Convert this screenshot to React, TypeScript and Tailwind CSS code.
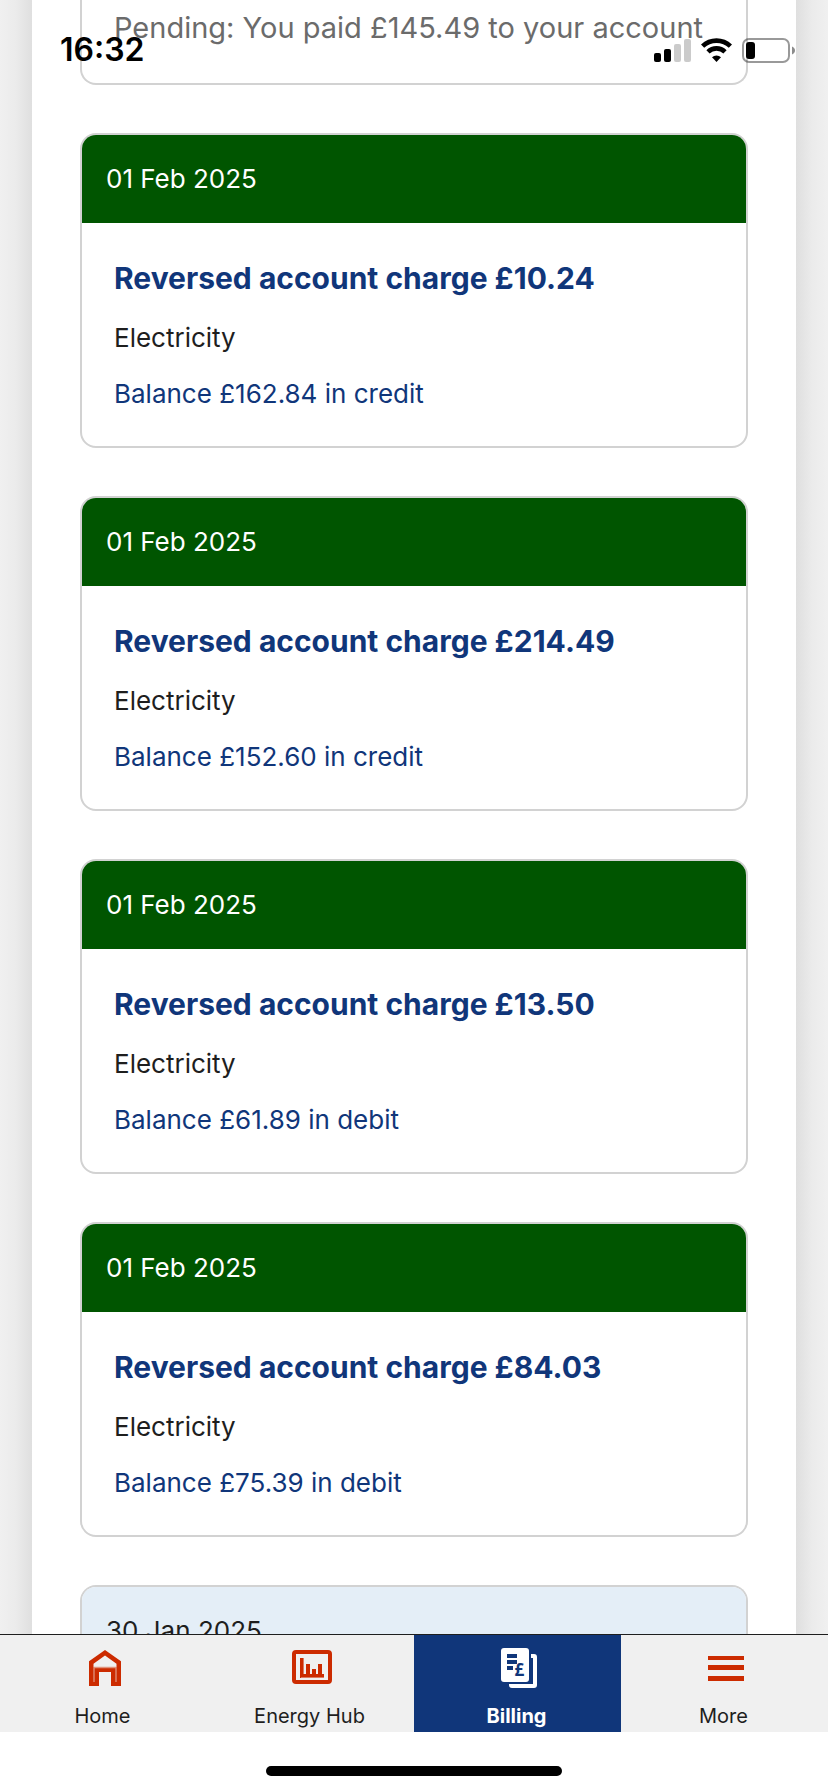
import type { ReactNode } from "react";

type Charge = {
  date: string;
  title: string;
  fuel: string;
  balance: string;
};

const charges: Charge[] = [
  { date: "01 Feb 2025", title: "Reversed account charge £10.24", fuel: "Electricity", balance: "Balance £162.84 in credit" },
  { date: "01 Feb 2025", title: "Reversed account charge £214.49", fuel: "Electricity", balance: "Balance £152.60 in credit" },
  { date: "01 Feb 2025", title: "Reversed account charge £13.50", fuel: "Electricity", balance: "Balance £61.89 in debit" },
  { date: "01 Feb 2025", title: "Reversed account charge £84.03", fuel: "Electricity", balance: "Balance £75.39 in debit" },
];

function ChargeCard({ date, title, fuel, balance }: Charge) {
  return (
    <article className="shrink-0 overflow-hidden rounded-2xl border-2 border-[#d2d2d2] bg-white">
      <div className="bg-[#005500] px-6 py-6 text-[26px] leading-10 text-white">{date}</div>
      <div className="flex flex-col gap-4 px-8 pt-8 pb-8 text-[26px] leading-10">
        <h2 className="pb-px text-[30px] leading-[46px] font-bold text-[#10367a]">{title}</h2>
        <p>{fuel}</p>
        <p className="text-[#10367a]">{balance}</p>
      </div>
    </article>
  );
}

function StatusBar() {
  return (
    <div className="absolute inset-x-0 top-0 flex items-center justify-between pt-7 pr-8 pl-15 text-black">
      <span className="text-[32px] leading-11 font-semibold">16:32</span>
      <div className="flex items-center gap-[10px]">
        <svg width="37" height="25" viewBox="0 0 37 25" aria-hidden="true">
          <rect x="0" y="15" width="7" height="9" rx="2" />
          <rect x="10" y="11" width="7" height="13" rx="2" />
          <rect x="20" y="6" width="7" height="18" rx="2" fill="#cbcbcb" />
          <rect x="30" y="1" width="7" height="23" rx="2" fill="#cbcbcb" />
        </svg>
        <svg width="31" height="25" viewBox="0 0 31 25" fill="none" stroke="#000" aria-hidden="true">
          <path d="M1.6 8.2a20 20 0 0 1 27.8 0" strokeWidth="4.6" />
          <path d="M7 13.8a12.2 12.2 0 0 1 17 0" strokeWidth="4.6" />
          <path d="M11 19.3a6.8 6.8 0 0 1 9 0L15.5 24z" fill="#000" stroke="none" />
        </svg>
        <svg width="54" height="25" viewBox="0 0 54 25" aria-hidden="true">
          <rect x="1" y="1" width="46" height="23" rx="6" fill="none" stroke="#000" strokeOpacity="0.4" strokeWidth="2" />
          <rect x="4" y="4" width="9" height="17" rx="3" />
          <path d="M50 8.5c4 1.5 4 6.5 0 8z" fillOpacity="0.45" />
        </svg>
      </div>
    </div>
  );
}

function HomeIcon() {
  return (
    <svg width="43" height="40" viewBox="0 0 43 40" aria-hidden="true">
      <path
        fill="#cc2b00"
        fillRule="evenodd"
        d="M23 2 39 13.3V38H29V24H17V38H7V13.3zM23 7.5 11.5 15.8V19H34.5V15.8z"
      />
      <path d="M12 34V19.5H34V34" fill="none" stroke="#e0937c" strokeWidth="1.3" />
    </svg>
  );
}

function EnergyHubIcon() {
  return (
    <svg width="43" height="40" viewBox="0 0 43 40" aria-hidden="true">
      <rect x="5" y="4" width="36" height="30" rx="2" fill="none" stroke="#cc2b00" strokeWidth="4" />
      <path fill="#cc2b00" d="M11 10h4v16h2V16h4v10h2v-5h4v5h2V16h4v10h2v4H11z" />
      <path d="M14.5 10v16M12 29.5h23" fill="none" stroke="#e0937c" strokeWidth="0.8" />
    </svg>
  );
}

function BillingIcon() {
  return (
    <svg width="43" height="40" viewBox="0 0 43 40" aria-hidden="true">
      <rect x="5" y="0" width="28" height="34" rx="3" fill="#fff" />
      <path fill="#fff" d="M35 6h3a3 3 0 0 1 3 3v28a3 3 0 0 1-3 3H16a3 3 0 0 1-3-3v-1h24V10h-2z" />
      <path fill="#10367a" d="M11 6h10v4H11zM11 12h10v4H11zM11 18h6v4h-6z" />
      <text x="18.5" y="28" fontSize="17" className="font-['Noto_Sans',sans-serif] font-bold" fill="#10367a">
        £
      </text>
    </svg>
  );
}

function MoreIcon() {
  return (
    <svg width="43" height="40" viewBox="0 0 43 40" aria-hidden="true">
      <path fill="#cc2b00" d="M5 8h36v4H5zM5 17h36v5H5zM5 28h36v5H5z" />
    </svg>
  );
}

function Tab({ label, icon, active = false }: { label: string; icon: ReactNode; active?: boolean }) {
  return (
    <a
      href="#"
      aria-current={active ? "page" : undefined}
      className={
        active
          ? "flex flex-1 flex-col items-center gap-4 bg-[#10367a] pt-[13px] pb-1 font-bold text-white"
          : "flex flex-1 flex-col items-center gap-4 pt-[13px] pb-1"
      }
    >
      {icon}
      <span className="pr-[2px] text-[20px] leading-6">{label}</span>
    </a>
  );
}

export default function App() {
  return (
    <div className="relative flex h-screen flex-col overflow-hidden bg-white font-['Inter',sans-serif] text-[#1e1e1e]">
      <main className="flex min-h-0 flex-1 overflow-hidden">
        <div className="w-8 shrink-0 bg-linear-to-r from-[#f0f0f0] via-[#ebebeb] to-[#dfdfdf]" />
        <div className="flex min-w-0 flex-1 flex-col gap-12 bg-white px-12">
          {/* Tail of the card scrolled past the top */}
          <article className="shrink-0 rounded-b-2xl border-2 border-t-0 border-[#d2d2d2] px-8 pt-[5px] pb-8">
            <p className="text-[29px] leading-[46px] whitespace-nowrap text-[#6b6b6b]">
              Pending: You paid £145.49 to your account
            </p>
          </article>

          {charges.map((charge) => (
            <ChargeCard key={charge.title} {...charge} />
          ))}

          <article className="shrink-0 overflow-hidden rounded-t-2xl border-2 border-b-0 border-[#d2d2d2]">
            <div className="bg-[#e4eef7] px-6 py-6 text-[26px] leading-10">30 Jan 2025</div>
          </article>
        </div>
        <div className="w-8 shrink-0 bg-linear-to-l from-[#f0f0f0] via-[#ebebeb] to-[#dfdfdf]" />
      </main>

      <nav className="flex shrink-0 border-t border-[#1e1e1e] bg-[#f0f0f0]">
        <Tab label="Home" icon={<HomeIcon />} />
        <Tab label="Energy Hub" icon={<EnergyHubIcon />} />
        <Tab label="Billing" icon={<BillingIcon />} active />
        <Tab label="More" icon={<MoreIcon />} />
      </nav>

      {/* Home indicator */}
      <div className="flex shrink-0 justify-center pt-[34px] pb-4">
        <div className="h-[10px] w-[296px] rounded-full bg-black" />
      </div>

      <StatusBar />
    </div>
  );
}
